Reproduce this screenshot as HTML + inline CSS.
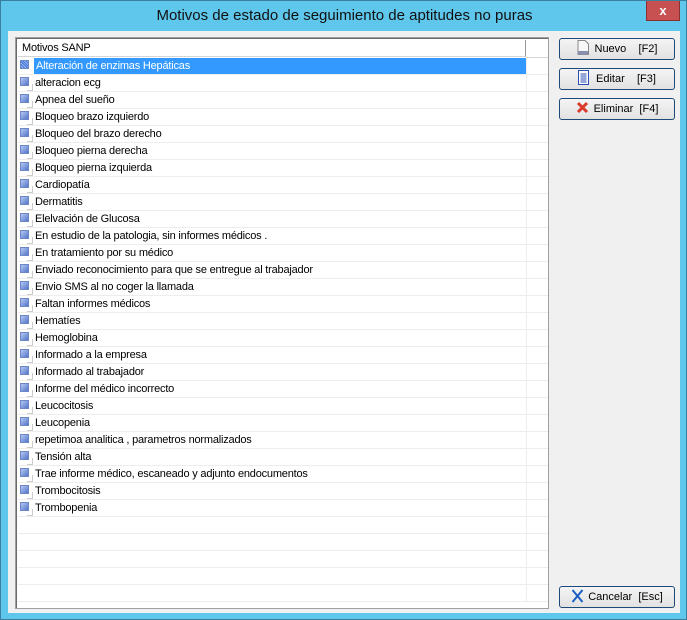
<!DOCTYPE html><html><head><style>
body{margin:0;width:687px;height:620px;overflow:hidden;font-family:"Liberation Sans",sans-serif;}
.win{position:absolute;left:0;top:0;width:685px;height:618px;background:#5fc7ec;border:1px solid #3a7fa0;overflow:hidden;}
.title{position:absolute;left:0;top:6px;width:687px;text-align:center;font-size:15px;color:#111;}
.close{position:absolute;left:645px;top:0;width:34px;height:20px;background:#c75050;color:#fff;font-weight:bold;font-size:13px;text-align:center;line-height:19px;border:1px solid #8a3030;border-top:none;box-sizing:border-box;}
.client{position:absolute;left:7px;top:30px;width:672px;height:582px;background:#f0f0f0;overflow:hidden;}
.list{position:absolute;left:7px;top:6px;width:532px;height:570px;border:1px solid #a0a0a0;box-shadow:inset 1px 1px 0 #696969;background:#fff;overflow:hidden;}
.hdr{position:absolute;left:2px;top:2px;width:508px;height:17px;border-right:1px solid #999;border-bottom:1px solid #d5d5d5;font-size:11px;line-height:17px;padding-left:4px;box-sizing:border-box;background:#fff;letter-spacing:-0.2px;}
.hdr2{position:absolute;left:510px;top:2px;width:22px;height:17px;border-bottom:1px solid #d5d5d5;}
.rows{position:absolute;left:2px;top:20px;width:530px;}
.r{height:16px;border-bottom:1px solid #ededed;font-size:11px;line-height:16px;position:relative;letter-spacing:-0.2px;}
.r:after{content:"";position:absolute;left:508px;top:0;width:1px;height:17px;background:#ededed;}
.ic{position:absolute;left:2px;top:2px;width:9px;height:9px;background:linear-gradient(135deg,#b4c8f0,#5577cc);border:1px solid #6b87c8;box-sizing:border-box;}
.ic2{position:absolute;left:9px;top:9px;width:5px;height:6px;border:1px solid #ccc;border-left:none;border-top:none;}
.t{position:absolute;left:17px;top:0;}
.sel .t{left:16px;background:#3399ff;color:#fff;width:490px;padding-left:2px;}
.btn{position:absolute;left:551px;width:116px;height:22px;border:1px solid #1d4a78;border-radius:3px;background:linear-gradient(#f4f4f4,#e2e2e2);box-sizing:border-box;font-size:11px;line-height:20px;text-align:center;}
</style></head><body>
<div class="win">
<div class="title">Motivos de estado de seguimiento de aptitudes no puras</div>
<div class="close">x</div>
<div class="client">
<div class="list">
<div class="hdr">Motivos SANP</div><div class="hdr2"></div>
<div class="rows">
<div class="r sel"><i class="ic" style="background:repeating-linear-gradient(45deg,#3a6ed8 0 1px,#9fc0f4 1px 2px)"></i><span class="t">Alteración de enzimas Hepáticas</span></div>
<div class="r"><i class="ic"></i><i class="ic2"></i><span class="t">alteracion ecg</span></div>
<div class="r"><i class="ic"></i><i class="ic2"></i><span class="t">Apnea del sueño</span></div>
<div class="r"><i class="ic"></i><i class="ic2"></i><span class="t">Bloqueo brazo izquierdo</span></div>
<div class="r"><i class="ic"></i><i class="ic2"></i><span class="t">Bloqueo del brazo derecho</span></div>
<div class="r"><i class="ic"></i><i class="ic2"></i><span class="t">Bloqueo pierna derecha</span></div>
<div class="r"><i class="ic"></i><i class="ic2"></i><span class="t">Bloqueo pierna izquierda</span></div>
<div class="r"><i class="ic"></i><i class="ic2"></i><span class="t">Cardiopatía</span></div>
<div class="r"><i class="ic"></i><i class="ic2"></i><span class="t">Dermatitis</span></div>
<div class="r"><i class="ic"></i><i class="ic2"></i><span class="t">Elelvación de Glucosa</span></div>
<div class="r"><i class="ic"></i><i class="ic2"></i><span class="t">En estudio de la patologia, sin informes médicos .</span></div>
<div class="r"><i class="ic"></i><i class="ic2"></i><span class="t">En tratamiento por su médico</span></div>
<div class="r"><i class="ic"></i><i class="ic2"></i><span class="t">Enviado reconocimiento para que se entregue al trabajador</span></div>
<div class="r"><i class="ic"></i><i class="ic2"></i><span class="t">Envio SMS al no coger la llamada</span></div>
<div class="r"><i class="ic"></i><i class="ic2"></i><span class="t">Faltan informes médicos</span></div>
<div class="r"><i class="ic"></i><i class="ic2"></i><span class="t">Hematíes</span></div>
<div class="r"><i class="ic"></i><i class="ic2"></i><span class="t">Hemoglobina</span></div>
<div class="r"><i class="ic"></i><i class="ic2"></i><span class="t">Informado a la empresa</span></div>
<div class="r"><i class="ic"></i><i class="ic2"></i><span class="t">Informado al trabajador</span></div>
<div class="r"><i class="ic"></i><i class="ic2"></i><span class="t">Informe del médico incorrecto</span></div>
<div class="r"><i class="ic"></i><i class="ic2"></i><span class="t">Leucocitosis</span></div>
<div class="r"><i class="ic"></i><i class="ic2"></i><span class="t">Leucopenia</span></div>
<div class="r"><i class="ic"></i><i class="ic2"></i><span class="t">repetimoa analitica , parametros normalizados</span></div>
<div class="r"><i class="ic"></i><i class="ic2"></i><span class="t">Tensión alta</span></div>
<div class="r"><i class="ic"></i><i class="ic2"></i><span class="t">Trae informe médico, escaneado y adjunto endocumentos</span></div>
<div class="r"><i class="ic"></i><i class="ic2"></i><span class="t">Trombocitosis</span></div>
<div class="r"><i class="ic"></i><i class="ic2"></i><span class="t">Trombopenia</span></div>
<div class="r"></div><div class="r"></div><div class="r"></div><div class="r"></div><div class="r"></div>
</div></div>
<div class="btn" style="top:7px"><svg width="12" height="15" style="vertical-align:-3px;margin-right:6px"><path d="M1 .5h7l3.5 3.5v10.5h-10.5z" fill="#f8f8f8" stroke="#888"/><path d="M1 11h10v3.5H1z" fill="#8a8fb0"/></svg>Nuevo&nbsp;&nbsp;&nbsp;&nbsp;[F2]</div>
<div class="btn" style="top:37px"><svg width="11" height="15" style="vertical-align:-3px;margin-right:7px"><rect x=".5" y=".5" width="10" height="14" fill="#fff" stroke="#2a4fb0"/><path d="M2.5 4h6M2.5 6h6M2.5 8h6M2.5 10h6M2.5 12h6" stroke="#2a4fb0"/></svg>Editar&nbsp;&nbsp;&nbsp;&nbsp;[F3]</div>
<div class="btn" style="top:67px"><svg width="13" height="13" style="vertical-align:-2px;margin-right:5px"><path d="M2 2l9 9M11 2l-9 9" stroke="#d93a2b" stroke-width="3"/></svg>Eliminar&nbsp;&nbsp;[F4]</div>
<div class="btn" style="top:555px"><svg width="13" height="14" style="vertical-align:-3px;margin-right:4px"><path d="M1.5 1l10 12M11.5 1l-10 12" stroke="#1a5fc4" stroke-width="2"/></svg>Cancelar&nbsp;&nbsp;[Esc]</div>
</div></div>
</body></html>
